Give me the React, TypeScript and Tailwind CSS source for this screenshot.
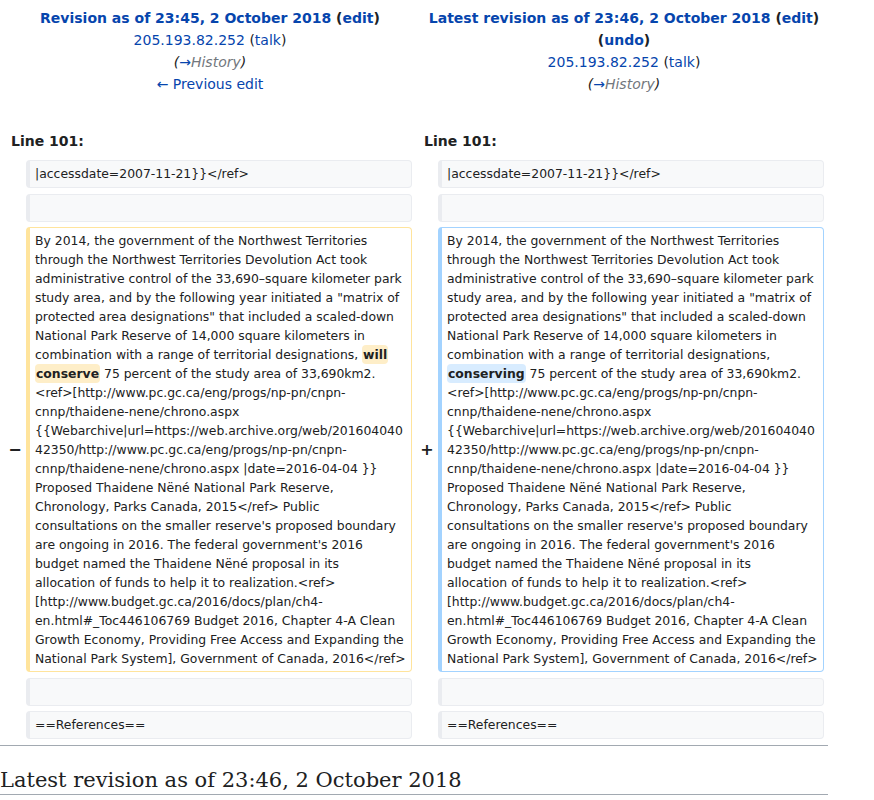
import React from "react"

const link = "text-[#0645ad]"

// wikitext of the changed paragraph, broken as the diff view shows it
const head = [
  "By 2014, the government of the Northwest Territories",
  "through the Northwest Territories Devolution Act took",
  "administrative control of the 33,690–square kilometer park",
  'study area, and by the following year initiated a "matrix of',
  'protected area designations" that included a scaled-down',
  "National Park Reserve of 14,000 square kilometers in",
]
const tail = [
  "<ref>[http://www.pc.gc.ca/eng/progs/np-pn/cnpn-",
  "cnnp/thaidene-nene/chrono.aspx",
  "{{Webarchive|url=https://web.archive.org/web/201604040",
  "42350/http://www.pc.gc.ca/eng/progs/np-pn/cnpn-",
  "cnnp/thaidene-nene/chrono.aspx |date=2016-04-04 }}",
  "Proposed Thaidene Nëné National Park Reserve,",
  "Chronology, Parks Canada, 2015</ref> Public",
  "consultations on the smaller reserve's proposed boundary",
  "are ongoing in 2016. The federal government's 2016",
  "budget named the Thaidene Nëné proposal in its",
  "allocation of funds to help it to realization.<ref>",
  "[http://www.budget.gc.ca/2016/docs/plan/ch4-",
  "en.html#_Toc446106769 Budget 2016, Chapter 4-A Clean",
  "Growth Economy, Providing Free Access and Expanding the",
  "National Park System], Government of Canada, 2016</ref>",
]

const delMark = "rounded-[4px] bg-[#feeec8] px-px py-[2px] font-bold no-underline"
const insMark = "rounded-[4px] bg-[#d8ecff] px-px py-[2px] font-bold no-underline"

function Lines({ lines }: { lines: string[] }) {
  return (
    <>
      {lines.map((l, i) => (
        <div key={i}>{l}</div>
      ))}
    </>
  )
}

// one line of unchanged wikitext on both sides
function Context({ text }: { text: string }) {
  return (
    <div className="h-[28px] rounded-[4px] border border-l-4 border-[#eaecf0] bg-[#f8f9fa] pl-[5px] pr-[6px] pt-[3px] whitespace-pre">
      {text}
    </div>
  )
}

function ContextRow({ text }: { text: string }) {
  return (
    <div className="grid grid-cols-[22px_386px_26px_386px]">
      <div />
      <Context text={text} />
      <div />
      <Context text={text} />
    </div>
  )
}

export default function App() {
  return (
    <div className="w-[828px] bg-white font-['DejaVu_Sans',sans-serif] text-[14px] leading-[22px] text-[#202122]">
      <div className="grid grid-cols-[412px_416px] pl-[4px]">
        <div className="pt-[7px] text-center">
          <div className="font-bold">
            <a className={link}>Revision as of 23:45, 2 October 2018</a> (<a className={link}>edit</a>)
          </div>
          <div>
            <a className={link}>205.193.82.252</a> (<a className={link}>talk</a>)
          </div>
          <div className="italic">
            (<a className={link}>→</a>
            <span className="text-[#72777d]">History</span>)
          </div>
          <div>
            <a className={link}>← Previous edit</a>
          </div>
        </div>
        <div className="pl-[4px] pr-[4px] pt-[7px] text-center">
          <div className="font-bold">
            <a className={link}>Latest revision as of 23:46, 2 October 2018</a> (<a className={link}>edit</a>){" "}
            (<a className={link}>undo</a>)
          </div>
          <div>
            <a className={link}>205.193.82.252</a> (<a className={link}>talk</a>)
          </div>
          <div className="italic">
            (<a className={link}>→</a>
            <span className="text-[#72777d]">History</span>)
          </div>
        </div>
      </div>

      <div className="mt-[35px] grid grid-cols-[412px_416px] pl-[4px] font-bold">
        <div className="pl-[7px]">Line 101:</div>
        <div className="pl-[8px]">Line 101:</div>
      </div>

      <div className="mt-[8px] flex flex-col gap-y-[5.5px] pl-[4px] text-[12.4px] leading-[19px]">
        <ContextRow text="|accessdate=2007-11-21}}</ref>" />
        <ContextRow text="" />

        <div className="grid grid-cols-[22px_386px_26px_386px]">
          <div className="flex items-center justify-center text-[16px] font-bold">−</div>
          <div className="rounded-[4px] border border-l-4 border-[#ffe49c] bg-white py-[3px] pl-[5px] pr-[6px] whitespace-pre">
            <Lines lines={head} />
            <div>
              combination with a range of territorial designations, <del className={delMark}>will</del>
            </div>
            <div>
              <del className={delMark}>conserve</del> 75 percent of the study area of 33,690km2.
            </div>
            <Lines lines={tail} />
          </div>
          <div className="flex items-center justify-center pl-[4px] text-[16px] font-bold">+</div>
          <div className="rounded-[4px] border border-l-4 border-[#a3d3ff] bg-white py-[3px] pl-[5px] pr-[6px] whitespace-pre">
            <Lines lines={head} />
            <div>combination with a range of territorial designations,</div>
            <div>
              <ins className={insMark}>conserving</ins> 75 percent of the study area of 33,690km2.
            </div>
            <Lines lines={tail} />
          </div>
        </div>

        <ContextRow text="" />
        <ContextRow text="==References==" />
      </div>

      <div className="mt-[6px] h-px bg-[#a2a9b1]" />

      <h2 className="mt-[21px] border-b border-[#a2a9b1] font-['DejaVu_Serif',serif] text-[21px] leading-[27px] font-normal">
        Latest revision as of 23:46, 2 October 2018
      </h2>
    </div>
  )
}
